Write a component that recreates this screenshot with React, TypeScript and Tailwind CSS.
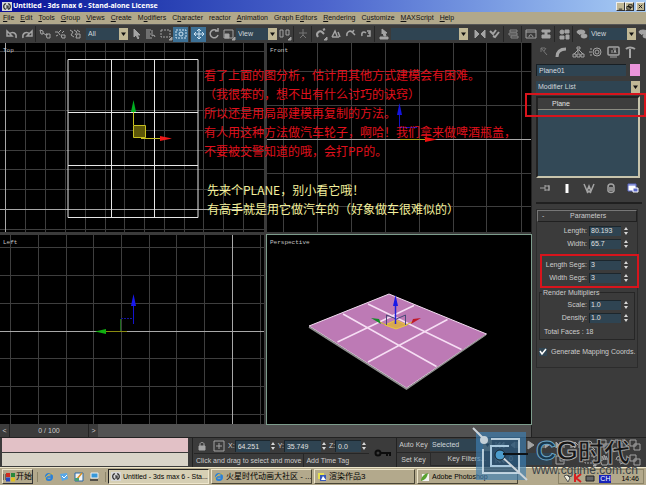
import { useState } from 'react'
import type { ReactNode } from 'react'

const menus = [
  ['', 'F', 'ile'],
  ['', 'E', 'dit'],
  ['', 'T', 'ools'],
  ['', 'G', 'roup'],
  ['', 'V', 'iews'],
  ['', 'C', 'reate'],
  ['M', 'o', 'difiers'],
  ['C', 'h', 'aracter'],
  ['', '', 'reactor'],
  ['', 'A', 'nimation'],
  ['Graph E', 'd', 'itors'],
  ['', 'R', 'endering'],
  ['C', 'u', 'stomize'],
  ['', 'M', 'AXScript'],
  ['', 'H', 'elp'],
]

// All icons share a 14x14 box
const icons: Record<string, ReactNode> = {
  undo: <path strokeWidth="1.5" d="M11 11c1-5-3-7-7-4M2 4v5h5z" />,
  redo: <path strokeWidth="1.5" d="M3 11c-1-5 3-7 7-4M12 4v5H7z" />,
  link: <path d="M2 3l3 1v3H3zM5 6l3 2M8 7h4v4H9zM8 7l2 1" />,
  unlink: <path d="M2 5h3l2 3M8 8h4v3H9zM8 3l-2 2M3 9l2-1M11 4l-2 2" />,
  bind: <path d="M2 3l3 2-2 3 3 2M6 3l3 2-2 3M9 7h3v4H8zM9 3l3 2" />,
  cursor: <path fill="currentColor" d="M5 2v8l2-2 2 4 1-1-2-3h3z" />,
  byName: <path d="M2 3h5M2 5h4M2 7h5M2 9h4M2 11h6M8 3v6l2-1 1 2" />,
  region: (
    <>
      <path strokeDasharray="2 1" d="M2 3h9v7H2z" />
      <path fill="currentColor" d="M13 10v3h-3z" />
    </>
  ),
  crossing: (
    <>
      <path strokeDasharray="2 1" d="M2 3h10v8H2z" />
      <circle cx="7" cy="7" r="2" />
    </>
  ),
  move: <path d="M7 2v10M2 7h10M5 4l2-2 2 2M5 10l2 2 2-2M4 5L2 7l2 2M10 5l2 2-2 2" />,
  rotate: <path strokeWidth="1.5" d="M10 4a4 4 0 1 0 1 4M8 4h3V1" />,
  scale: (
    <>
      <path d="M2 3h9v8H2z" />
      <path fill="currentColor" d="M3 7h4v4H3zM13 10v3h-3z" />
    </>
  ),
  pivot: (
    <>
      <path d="M2 3h3v7H2zM8 3h3v5H8z" />
      <path fill="currentColor" d="M13 10v3h-3z" />
    </>
  ),
  manipulate: <path stroke="#777" d="M7 2v6M3 6h8M7 8l-3 3M7 8l3 3" />,
  snap: (
    <>
      <path strokeWidth="2" d="M4 10C1 6 6 3 8 5l2 2M9 3l2-1" />
      <path fill="currentColor" d="M13 10v3h-3z" />
    </>
  ),
  angle: <path strokeWidth="1.5" d="M3 10l3-6 2 5M3 10h7M9 5l2 5" />,
  percent: <path strokeWidth="1.5" d="M3 9c-1-4 3-6 5-4l3 3M10 3l-2 3" />,
  spin: <path strokeWidth="1.5" d="M3 9c-1-4 2-5 4-3M8 4h3v2H9h2v3H8" />,
  named: <path fill="currentColor" d="M5 2l5 4H8l1 3H7L6 6 5 7zM3 10h8v2H3z" />,
  mirror: <path fill="currentColor" d="M2 3l4 4-4 4zM12 3L8 7l4 4z" />,
  align: <path strokeWidth="2" d="M2 4l3 3 3-4M5 9l2 1 4-5" />,
  layers: <path stroke="#888" d="M4 3h7v2H4zM3 6h8v2H3zM5 9h7v2H5z" />,
  curve: <path d="M2 3h10v8H2zM2 5h10M5 10c0-3 3-3 4 0" />,
  schematic: <path fill="currentColor" d="M3 3h8v2H8v3h3v3H3V8h3V5H3z" />,
  material: (
    <g fill="currentColor">
      <circle cx="5" cy="5" r="2" />
      <path d="M8 3h4v3H8zM3 9h4v3H3zM9 8h3v4H9z" />
    </g>
  ),
  render: (
    <g fill="currentColor">
      <ellipse cx="6" cy="5" rx="4" ry="2" />
      <ellipse cx="9" cy="9" rx="3" ry="2" />
      <path d="M2 4l3 4" />
    </g>
  ),
  create: <path stroke="#777" d="M4 3l6 7M4 3v4M4 3h4M9 3l-2 3" />,
  modify: <path strokeWidth="3" d="M3 12C3 6 7 4 12 4" />,
  hierarchy: <path d="M6 2h3v2H6zM7 4v4M7 5l-4 4M8 5l4 4M2 9h3v3H2zM6 9h3v3H6zM10 9h3v3h-3z" />,
  motion: (
    <>
      <circle cx="8" cy="7" r="4" />
      <circle cx="8" cy="7" r="2" />
      <path d="M1 4h2M0 7h3M1 10h2" />
    </>
  ),
  display: (
    <>
      <rect x="2" y="2" width="11" height="8" rx="1" strokeWidth="1.5" />
      <path d="M4 12h7M6 8V5M8 8l1-3 1 3M7 4h3" />
    </>
  ),
  utilities: <path strokeWidth="2" d="M7 4v9M3 4c2-2 6-2 9 0" />,
  pin: <path d="M1 7h5M6 4v6M6 5h4v4H6M10 4v6" />,
  endResult: <path stroke="#fff" strokeWidth="3" d="M7 3v9" />,
  unique: <path strokeWidth="1.5" d="M2 3l3 7 2-5 2 5 3-7M5 12l2-2 2 2" />,
  trash: <path strokeWidth="1.5" d="M4 6c0-4 6-4 6 0v4c-1 2-5 2-6 0zM6 6v4M8 6v4" />,
  configure: (
    <>
      <path fill="#fff" stroke="#5a68c8" d="M2 3h8v7H2zM2 4h8" />
      <path fill="#5a68c8" stroke="#fff" d="M7 7h5v4H7z" />
    </>
  ),
  lock: (
    <>
      <path fill="currentColor" d="M4 7h6v4H4z" />
      <path d="M5 7V5c0-2 4-2 4 0v2" />
    </>
  ),
  absolute: <path d="M2 2h10v10H2zM7 4v6M4 7h6" />,
  first: <path fill="currentColor" d="M3 4v6M7 4L4 7l3 3zM11 4L8 7l3 3z" />,
  prev: <path fill="currentColor" d="M7 4L3 7l4 3zM9 4v6M11 4v6" />,
  play: <path fill="currentColor" d="M5 3l6 4-6 4z" />,
  next: <path fill="currentColor" d="M7 4l4 3-4 3zM5 4v6M3 4v6" />,
  last: <path fill="currentColor" d="M11 4v6M3 4l3 3-3 3zM7 4l3 3-3 3z" />,
  keyMode: <path fill="currentColor" d="M3 4v6M4 7l3-3v6zM11 4v6M10 7L7 4" />,
  timeConfig: <path d="M3 3h8v8H3zM7 5v3h3" />,
  zoom: <path d="M3 6a3 3 0 1 0 6 0a3 3 0 1 0-6 0M8 8l4 4" />,
  zoomAll: <path d="M2 2h6v6H2zM6 6h6v6H6z" />,
  extents: <path d="M2 5V2h3M9 2h3v3M12 9v3H9M5 12H2V9M5 5h4v4H5z" />,
  pan: <path d="M4 12L2 7l2 1V3l2 4V2l2 5V3l2 4v3l-1 2z" />,
  arc: <path d="M3 7a4 4 0 1 1 4 4M7 4v6M4 7h6" />,
}

function Icon({ name }: { name: string }) {
  return (
    <svg viewBox="0 0 14 14" className="h-3.5 w-3.5 shrink-0" fill="none" stroke="currentColor" aria-hidden="true">
      {icons[name]}
    </svg>
  )
}

function Tool({ name, active = false }: { name: string; active?: boolean }) {
  return (
    <button
      aria-label={name}
      className={`flex h-[15px] w-[15px] shrink-0 items-center justify-center ${
        active ? 'bg-[#3d7196] text-[#cfe4f2]' : 'text-[#a4a4a4]'
      }`}
    >
      <Icon name={name} />
    </button>
  )
}

function Divider() {
  return <div className="mx-px h-4 w-px shrink-0 bg-[#262626]" />
}

function Drop({ label, options, className }: { label: string; options: string[]; className: string }) {
  return (
    <div className={`relative flex h-3 items-center bg-[#2f4452] ${className}`}>
      <select aria-label={label} className="h-full w-full appearance-none bg-transparent pl-0.5 text-[#d0d6da] outline-none">
        {options.map((option) => (
          <option key={option}>{option}</option>
        ))}
      </select>
      <svg viewBox="0 0 9 11" className="pointer-events-none absolute right-0 h-full w-[9px] bg-[#c0b896]" aria-hidden="true">
        <path d="M2 4h5L4.500 7.500z" fill="#111" />
      </svg>
    </div>
  )
}

function SpinArrows() {
  return (
    <svg viewBox="0 0 6 10" className="h-2.5 w-1.5 shrink-0" fill="#d8d8d8" aria-hidden="true">
      <path d="M1 4l2-3 2 3zM1 6h4l-2 3z" />
    </svg>
  )
}

function Field({ id, label, value }: { id: string; label: string; value: string }) {
  return (
    <div className="flex h-[13px] items-center">
      <label htmlFor={id} className="flex-1 text-right">
        {label}
      </label>
      <input
        id={id}
        defaultValue={value}
        className="ml-0.5 h-2.5 w-8 border-l border-t border-[#1c262c] bg-[#2f4452] pl-px text-[#e0e0e0] outline-none"
      />
      <div className="ml-0.5 mr-2">
        <SpinArrows />
      </div>
    </div>
  )
}

function Coord({ axis, value, width }: { axis: string; value: string; width: string }) {
  return (
    <label className="flex shrink-0 items-center">
      {axis}:
      <input
        defaultValue={value}
        className={`h-3 border-l border-t border-[#1c262c] bg-[#2f4452] pl-0.5 text-[#e0e0e0] outline-none ${width}`}
      />
      <SpinArrows />
    </label>
  )
}

function Viewport({ name, viewBox, active = false, children }: { name: string; viewBox: string; active?: boolean; children: ReactNode }) {
  return (
    <section aria-label={name} className={`relative min-h-0 overflow-hidden bg-black ${active ? 'outline outline-[#7d9c8c]' : ''}`}>
      <svg viewBox={viewBox} preserveAspectRatio="xMinYMin slice" className="h-full w-full" fill="none">
        {children}
      </svg>
      <span className="absolute left-[3px] top-1 font-['Liberation_Mono',monospace] text-[6px] leading-[8px] text-[#c4c4c4]">{name}</span>
    </section>
  )
}

function Grid({ xs, ys, axisX, axisY }: { xs: number[]; ys: number[]; axisX?: number; axisY?: number }) {
  return (
    <g stroke="#3e3e3e">
      {xs.map((x) => (
        <path key={x} d={`M${x}.5 0V190`} />
      ))}
      {ys.map((y) => (
        <path key={y} d={`M0 ${y}.5H265`} />
      ))}
      {axisX !== undefined && <path stroke="#a8a8a8" d={`M${axisX}.5 0V190`} />}
      {axisY !== undefined && <path stroke="#a8a8a8" d={`M0 ${axisY}.5H265`} />}
    </g>
  )
}

function TopView() {
  return (
    <Viewport name="Top" viewBox="0 0 264 189">
      <Grid
        xs={[25, 45, 65, 85, 105, 124, 144, 164, 184, 203, 223, 243]}
        ys={[8, 28, 47, 67, 87, 107, 126, 146, 186]}
        axisX={5}
        axisY={166}
      />
      <path stroke="#e6e6e6" d="M68 16.500h130v158H68zM111.500 16v159M154.500 16v159M68 69.500h130M68 122.500h130" />
      <path fill="#5c5608" stroke="#c8c020" d="M133.500 82.500h12v12h-12z" />
      <path stroke="#c8c020" d="M133.500 68v14M141 95.500h20" />
      <path fill="#00b020" d="M131 69l2.500-12 2.500 12z" />
      <path fill="#f01818" d="M160 93l12 2.500-12 2.500z" />
    </Viewport>
  )
}

function FrontView() {
  return (
    <Viewport name="Front" viewBox="0 0 264 189">
      <Grid xs={[16, 50, 84, 118, 152, 186, 219, 254]} ys={[28, 62, 130, 163]} axisY={96} />
      <path stroke="#1414c0" d="M132.500 68v16M133 84.500h17" />
      <path fill="#1414e0" d="M130 72l2.500-12 2.500 12z" />
      <path stroke="#a8a020" d="M133 96.500h26" />
      <path fill="#f01010" d="M158 94l12 2.500-12 2.500z" />
    </Viewport>
  )
}

function LeftView() {
  return (
    <Viewport name="Left" viewBox="0 0 264 189">
      <Grid
        xs={[10, 38, 66, 93, 121, 149, 176, 204, 260]}
        ys={[12, 40, 68, 123, 151, 179]}
        axisX={232}
        axisY={96}
      />
      <path stroke="#1414d0" d="M133.500 68v21" />
      <path stroke="#1414a0" strokeDasharray="2 1" d="M121 83.500h12" />
      <path stroke="#1c6a1c" d="M120.500 84v12" />
      <path stroke="#8a8a10" d="M104 96.500h23" />
      <path fill="#1818f0" d="M131 71l2.500-12 2.500 12z" />
      <path fill="#10b010" d="M106 94l-11 2.500 11 2.500z" />
    </Viewport>
  )
}

function PerspectiveView() {
  return (
    <Viewport name="Perspective" viewBox="0 0 264 189" active>
      <path fill="#bd7ab5" stroke="#f2dcf0" d="M122 59l97.500 40-80 54L42 91z" />
      <path stroke="#8e8e8e" strokeWidth="1.5" d="M42 92l97.500 62 79-54" />
      <path stroke="#f6def4" strokeWidth="1.5" d="M76 79l93.500 52.500M101 69l93.500 45.500M147 70.500L70.500 107M180.500 84.500L101 127" />
      <path fill="#d8a850" stroke="#e8c840" d="M118 90l11-5 11 5-11 4z" />
      <path stroke="#4a4a78" d="M119.500 90V80l10 4 9-4v10" />
      <path stroke="#d8c030" d="M119 90l-8-4M139 90l8-4" />
      <path stroke="#2020d8" strokeWidth="1.5" d="M128.500 89V66" />
      <path fill="#1818e8" d="M126 71l2.500-11 2.500 11z" />
      <path fill="#138a28" d="M104 83l8 1 2 5z" />
      <path fill="#c01828" d="M154 83l-8 1-2 5z" />
    </Viewport>
  )
}

function Notes() {
  return (
    <div className="pointer-events-none absolute left-[204px] top-[22px] whitespace-nowrap font-['Noto_Sans_CJK_SC',sans-serif] text-[12px] leading-[19px]">
      <p className="text-[#e0101c]">
        看了上面的图分析，估计用其他方式建模会有困难。
        <br />
        （我很笨的，想不出有什么讨巧的诀窍）
        <br />
        所以还是用局部建模再复制的方法。
        <br />
        有人用这种方法做汽车轮子，啊哈！我们拿来做啤酒瓶盖，
        <br />
        不要被交警知道的哦，会打PP的。
      </p>
      <p className="ml-[3px] mt-5 text-[#f4f09c]">
        先来个PLANE，别小看它哦！
        <br />
        有高手就是用它做汽车的（好象做车很难似的）
      </p>
    </div>
  )
}

function CommandPanel() {
  const [mapping, setMapping] = useState(true)

  return (
    <aside className="flex w-[115px] shrink-0 flex-col border-l border-[#222] px-1">
      <div className="flex h-[18px] items-center justify-between pr-1">
        {['create', 'modify', 'hierarchy', 'motion', 'display', 'utilities'].map((name) => (
          <Tool key={name} name={name} />
        ))}
      </div>
      <div className="mt-[3px] flex h-3 items-center gap-1 pr-0.5">
        <input aria-label="Object name" defaultValue="Plane01" className="h-3 min-w-0 flex-1 border-l border-t border-[#181f24] bg-[#2f4452] pl-0.5 text-[#d8dde0] outline-none" />
        <button aria-label="Object color" className="h-3 w-[10px] bg-[#ea94da]" />
      </div>
      <Drop label="Modifier List" options={['Modifier List']} className="mr-0.5 mt-[5px]" />

      {/* Modifier stack */}
      <div className="relative mr-0.5 mt-[3px]">
        <ul className="h-[82px] border-2 border-b-[#c8c4ac] border-l-[#222] border-r-[#c8c4ac] border-t-[#222] bg-[#334957]">
          <li className="h-3 border-b border-[#8a8a80] bg-[#3d3d3d] pl-3.5 leading-[11px] text-[#e2e2e2]">Plane</li>
        </ul>
        <div className="pointer-events-none absolute -left-[11px] -right-[6px] -top-[3px] h-6 border-2 border-[#d8141c]" />
      </div>
      <div className="mt-0.5 flex h-4 items-center justify-between px-0.5">
        {['pin', 'endResult', 'unique', 'trash', 'configure'].map((name) => (
          <Tool key={name} name={name} />
        ))}
      </div>
      <div className="mt-1.5 h-0.5 bg-[#202020]" />

      {/* Parameters rollout */}
      <section className="mr-1 mt-[5px] border border-[#2c2c2c] pb-2.5">
        <button className="flex h-3 w-full items-center border border-b-[#202020] border-l-[#777] border-r-[#202020] border-t-[#777] px-1">
          <span>-</span>
          <span className="flex-1 text-center">Parameters</span>
        </button>
        <div className="mt-0.5">
          <Field id="length" label="Length:" value="80.193" />
          <Field id="width" label="Width:" value="65.7" />
        </div>
        <div className="relative mt-2">
          <Field id="length-segs" label="Length Segs:" value="3" />
          <Field id="width-segs" label="Width Segs:" value="3" />
          <div className="pointer-events-none absolute -inset-y-1 -right-[2px] left-[3px] border-2 border-[#d8141c]" />
        </div>
        <fieldset className="mx-0.5 mt-1 border border-[#262626] pb-px">
          <legend className="ml-0.5 px-px leading-[9px]">Render Multipliers</legend>
          <div className="-mr-[3px] pt-px">
            <Field id="scale" label="Scale:" value="1.0" />
            <Field id="density" label="Density:" value="1.0" />
          </div>
          <p className="mt-px pl-1 leading-[13px]">Total Faces : 18</p>
        </fieldset>
        <label className="mt-[7px] flex items-center gap-1 pl-0.5">
          <span className="relative flex h-2 w-2 shrink-0 items-center justify-center bg-[#2f4452]">
            <input
              type="checkbox"
              checked={mapping}
              onChange={(e) => setMapping(e.target.checked)}
              className="absolute inset-0 appearance-none"
            />
            {mapping && (
              <svg viewBox="0 0 8 8" className="pointer-events-none h-2 w-2" fill="none" stroke="#fff" strokeWidth="1.5">
                <path d="M1 3l2 3 4-5" />
              </svg>
            )}
          </span>
          <span className="whitespace-nowrap">Generate Mapping Coords.</span>
        </label>
      </section>
    </aside>
  )
}

function StatusBar() {
  return (
    <div className="flex h-[30px] shrink-0 items-stretch border-t border-[#222]">
      <div className="flex flex-1 flex-col gap-px pb-px pl-0.5">
        <input aria-label="Macro recorder" className="min-h-0 flex-1 bg-[#e2c1c6] outline-none" />
        <input aria-label="Listener" className="min-h-0 flex-1 bg-[#d9d4c8] outline-none" />
      </div>
      <div className="ml-1 flex w-[177px] shrink-0 flex-col border-l border-[#222] pl-px">
        <div className="flex h-[15px] items-center gap-0.5">
          <Tool name="lock" />
          <Tool name="absolute" />
          <Coord axis="X" value="64.251" width="w-[35px]" />
          <Coord axis="Y" value="35.749" width="w-[37px]" />
          <Coord axis="Z" value="0.0" width="w-[26px]" />
        </div>
        <div className="flex h-[14px] items-center border-t border-[#262626]">
          <span className="whitespace-nowrap pl-0.5">Click and drag to select and move</span>
          <button className="ml-0.5 h-full whitespace-nowrap border-l border-[#262626] pl-0.5">Add Time Tag</button>
        </div>
      </div>
      <button aria-label="Set keys" className="flex w-[27px] shrink-0 items-center justify-center">
        <svg viewBox="0 0 18 8" className="h-2 w-[18px]" fill="none" stroke="#0c0c0c" strokeWidth="2">
          <circle cx="4" cy="4" r="2.500" />
          <path d="M7 4h10M13 4v3M16 4v3" />
        </svg>
      </button>
      <div className="flex w-[34px] shrink-0 flex-col gap-px border-l border-[#222] py-px">
        <button className="flex-1 whitespace-nowrap border-b border-[#262626]">Auto Key</button>
        <button className="flex-1 whitespace-nowrap">Set Key</button>
      </div>
      <div className="flex w-[62px] shrink-0 flex-col gap-px py-px">
        <Drop label="Key selection" options={['Selected']} className="w-full" />
        <button className="flex-1 whitespace-nowrap border border-[#2a2a2a] pl-3">Key Filters...</button>
      </div>
      <div className="grid w-[90px] shrink-0 grid-cols-6 content-center">
        {['first', 'prev', 'play', 'next', 'last', 'keyMode'].map((name) => (
          <Tool key={name} name={name} />
        ))}
        <Tool name="first" />
        <input aria-label="Current frame" defaultValue="0" className="col-span-3 h-3 w-full bg-[#2f4452] pl-0.5 outline-none" />
        <Tool name="timeConfig" />
      </div>
      <div className="mr-1 grid w-[60px] shrink-0 grid-cols-4 content-center">
        {['zoom', 'zoomAll', 'extents', 'zoomAll', 'region', 'pan', 'arc', 'zoomAll'].map((name, index) => (
          <Tool key={index} name={name} />
        ))}
      </div>
    </div>
  )
}

function MaxLogo() {
  return (
    <svg viewBox="0 0 10 9" className="h-[9px] w-2.5 shrink-0" aria-hidden="true">
      <rect width="10" height="9" fill="#d8d8d8" />
      <path d="M4 2C1 1 1 8 4 7M6 2c3-1 3 6 0 5M4 4h2v2H4" fill="none" stroke="#222" strokeWidth="1.2" />
    </svg>
  )
}

function BrowserIcon() {
  return (
    <svg viewBox="0 0 10 10" className="h-2.5 w-2.5 shrink-0" fill="none" aria-hidden="true">
      <circle cx="5" cy="5" r="3" stroke="#2a80d8" strokeWidth="2" />
      <path d="M3 5h5" stroke="#2a80d8" strokeWidth="1.5" />
      <path d="M1 8c0-4 5-7 8-6" stroke="#e8c040" />
    </svg>
  )
}

function Task({ icon, label, active = false, className }: { icon: ReactNode; label: string; active?: boolean; className: string }) {
  return (
    <button
      className={`flex h-[15px] items-center gap-0.5 overflow-hidden whitespace-nowrap border px-0.5 ${className} ${
        active
          ? 'border-b-[#eee6cc] border-l-[#222] border-r-[#eee6cc] border-t-[#222] bg-[#d6cfb4]'
          : 'border-b-[#4a4636] border-l-[#eee6cc] border-r-[#4a4636] border-t-[#eee6cc]'
      }`}
    >
      {icon}
      {label}
    </button>
  )
}

function Taskbar() {
  return (
    <footer className="flex h-[18px] shrink-0 items-center border-t border-[#ece4c8] bg-[#b3a98c] px-0.5 font-['Liberation_Sans','Noto_Sans_CJK_SC',sans-serif] text-black">
      <button className="flex h-[15px] w-[31px] shrink-0 items-center gap-px border border-b-[#333] border-l-[#eee6cc] border-r-[#333] border-t-[#eee6cc] text-[8px]">
        <svg viewBox="0 0 12 10" className="h-2.5 w-3 shrink-0" aria-hidden="true">
          <path d="M0 3h3M0 5h3M0 7h3" stroke="#222" strokeDasharray="1 1" />
          <path d="M3 1h4v4H3z" fill="#d02c20" />
          <path d="M8 1h4v4H8z" fill="#28883c" />
          <path d="M3 5.500h4v4H3z" fill="#2848c0" />
          <path d="M8 5.500h4v4H8z" fill="#e0c020" />
        </svg>
        开始
      </button>
      <div className="ml-1 mr-0.5 flex shrink-0 items-center gap-[5px] border-x border-[#8c8468] px-1.5">
        <BrowserIcon />
        <svg viewBox="0 0 10 10" className="h-2.5 w-2.5" aria-hidden="true">
          <path d="M1 2l7-1 1 6-6 2z" fill="#58a8e8" />
          <path d="M3 4l2 2 3-3" stroke="#fff" fill="none" />
        </svg>
        <svg viewBox="0 0 10 10" className="h-2.5 w-2.5" aria-hidden="true">
          <path d="M1 1h8v8H1z" fill="#f4f4f4" stroke="#2868a8" />
          <path d="M3 7l5-6" stroke="#d89020" strokeWidth="1.5" />
          <path d="M1 6h4v3H1z" fill="#48a078" />
        </svg>
        <svg viewBox="0 0 10 10" className="h-2.5 w-2.5" aria-hidden="true">
          <path d="M2 1h7v5H2z" fill="#3898d8" stroke="#eee" />
          <path d="M1 8h8" stroke="#333" strokeWidth="1.5" />
        </svg>
      </div>
      <div className="flex min-w-0 flex-1 items-center gap-0.5">
        <Task icon={<MaxLogo />} label="Untitled - 3ds max 6 - Sta..." active className="w-[101px]" />
        <Task icon={<BrowserIcon />} label="火星时代动画大社区 - ..." className="w-[101px] text-[8px]" />
        <Task
          icon={
            <svg viewBox="0 0 10 10" className="h-2.5 w-2.5 shrink-0" aria-hidden="true">
              <path d="M1 1h6v6H1z" fill="#e8e050" />
              <path d="M3 3h6v6H3z" fill="#3858b8" />
              <path d="M4 8l2-4 3 4z" fill="#fff" />
            </svg>
          }
          label="渲染作品3"
          className="w-[101px] text-[8px]"
        />
        <Task
          icon={
            <svg viewBox="0 0 10 10" className="h-2.5 w-2.5 shrink-0" aria-hidden="true">
              <path d="M2 2h7v7H2z" fill="#f4f4f4" />
              <path d="M1 9c0-4 3-7 7-8-1 5-3 7-7 8z" fill="#58a030" />
            </svg>
          }
          label="Adobe Photoshop"
          className="w-[101px]"
        />
      </div>
      <div className="flex h-[15px] shrink-0 items-end gap-0.5 border border-[#8c8468] px-1 leading-[8px]">
        <svg viewBox="0 0 34 10" className="h-2.5 w-[34px]" aria-hidden="true">
          <path d="M1 3l3-1 3 3-2 4z" fill="#f0f0e0" stroke="#555" />
          <path d="M12 1v8M18 1l-5 4 5 4" stroke="#d82020" strokeWidth="2" fill="none" />
          <path d="M23 3h8v5h-8z" fill="#666" stroke="#222" />
        </svg>
        <span className="bg-[#1824b8] px-px text-white">CH</span>
        <time className="pl-2">14:46</time>
      </div>
    </footer>
  )
}

function Watermark() {
  return (
    <div className="pointer-events-none absolute bottom-1 right-2 flex items-end">
      <svg viewBox="0 0 56 54" className="h-[54px] w-14" fill="none" aria-hidden="true">
        <path d="M4 5h50v48H4z" fill="#3d80b4" fillOpacity="0.650" />
        <path d="M11 12h36v34H11z" fill="#1c3448" fillOpacity="0.450" />
        <path d="M19 12h28v34H11V22" stroke="#d8e8f2" strokeOpacity="0.800" strokeWidth="2" />
        <path d="M37 19H19v20h20" stroke="#a8c8de" strokeWidth="2" />
        <path d="M1 1l12 12M28 28l27 25" stroke="#ccd4da" strokeWidth="2" />
        <circle cx="12" cy="13" r="4" fill="#c4d0d8" />
        <circle cx="28" cy="28" r="5" fill="#4c9ccc" stroke="#16242e" />
        <path d="M31 27h25" stroke="#0e1216" strokeWidth="2" />
      </svg>
      <div className="ml-1 flex flex-col pb-1.5">
        <div className="flex items-center pl-1 text-[28px] font-bold leading-[28px]">
          <span className="text-[#17384e] [-webkit-text-stroke:1px_#6fa8c8]">C</span>
          <span className="text-[#161616] [-webkit-text-stroke:1px_#b4b4b4]">G</span>
          <span className="font-['Noto_Sans_CJK_SC',sans-serif] text-[26px] text-[#161616] [-webkit-text-stroke:1px_#9a9a9a]">时代</span>
        </div>
        <span className="text-[12px] leading-[10px] text-[#3a4248]">www.cgtime.com.cn</span>
      </div>
    </div>
  )
}

export default function App() {
  return (
    <main className="relative flex h-screen flex-col overflow-hidden bg-[#3b3b3b] font-['Liberation_Sans',sans-serif] text-[7px] leading-[10px] text-[#cccccc]">
      <header className="flex h-3 shrink-0 items-center bg-linear-to-r from-[#0c0c98] via-[#4c64cc] to-[#a8ccf4] pl-0.5 pr-px text-white">
        <MaxLogo />
        <h1 className="flex-1 pl-px font-['Noto_Sans',sans-serif] font-bold">Untitled - 3ds max 6 - Stand-alone License</h1>
        {['M2 7h4', 'M3 2h4v3H3zM1 4h4v3H1z', 'M2 2l4 4M6 2L2 6'].map((d, index) => (
          <button
            key={d}
            aria-label={['Minimize', 'Restore', 'Close'][index]}
            className={`h-[9px] w-[9px] border border-b-[#333] border-l-[#eee] border-r-[#333] border-t-[#eee] bg-[#c0b896] ${index === 2 ? 'ml-0.5' : ''}`}
          >
            <svg viewBox="0 0 8 8" className="h-full w-full" fill="none" stroke="#111">
              <path d={d} />
            </svg>
          </button>
        ))}
      </header>

      <nav className="flex h-3 shrink-0 items-center gap-1.5 bg-[#b1a88b] pl-[3px] text-[#111]">
        {menus.map(([before, key, after]) => (
          <button key={before + key + after} className="whitespace-nowrap">
            {before}
            <u>{key}</u>
            {after}
          </button>
        ))}
      </nav>

      <div className="flex h-[19px] shrink-0 items-center overflow-hidden border-t border-[#555] pl-1">
        <Tool name="undo" />
        <Tool name="redo" />
        <Divider />
        <Tool name="link" />
        <Tool name="unlink" />
        <Tool name="bind" />
        <Drop label="Selection filter" options={['All']} className="ml-1 w-[42px] shrink-0" />
        <Tool name="cursor" />
        <Tool name="byName" />
        <Tool name="region" />
        <Tool name="crossing" active />
        <Divider />
        <Tool name="move" active />
        <Tool name="rotate" />
        <Tool name="scale" />
        <Drop label="Coordinate system" options={['View']} className="w-[41px] shrink-0" />
        <Tool name="pivot" />
        <Divider />
        <Tool name="manipulate" />
        <Divider />
        <Tool name="snap" />
        <Tool name="angle" />
        <Tool name="percent" />
        <Tool name="spin" />
        <Divider />
        <Tool name="named" />
        <Drop label="Named selection sets" options={['']} className="min-w-0 flex-1" />
        <div className="w-1 shrink-0" />
        <Tool name="mirror" />
        <Tool name="align" />
        <Divider />
        <Tool name="layers" />
        <Divider />
        <Tool name="curve" />
        <Tool name="schematic" />
        <Divider />
        <Tool name="material" />
        <Divider />
        <Tool name="render" />
        <Drop label="Render type" options={['View']} className="w-[47px] shrink-0" />
        <div className="w-2.5 shrink-0 overflow-hidden">
          <Tool name="render" />
        </div>
      </div>

      <div className="flex min-h-0 flex-1">
        <div className="flex min-w-0 flex-1 flex-col">
          <div className="relative grid min-h-0 flex-1 grid-cols-2 grid-rows-2 gap-[3px]">
            <TopView />
            <FrontView />
            <LeftView />
            <PerspectiveView />
            <Notes />
          </div>
          <div className="flex h-[13px] shrink-0 items-center bg-[#525252]">
            <button aria-label="Previous frame" className="h-full w-[9px] bg-[#3b3b3b]">
              &lt;
            </button>
            <button className="h-full w-20 border-x border-[#222] bg-[#3b3b3b]">0 / 100</button>
            <button aria-label="Next frame" className="h-full w-[9px] bg-[#3b3b3b]">
              &gt;
            </button>
          </div>
        </div>
        <CommandPanel />
      </div>

      <StatusBar />
      <Taskbar />
      <Watermark />
    </main>
  )
}
